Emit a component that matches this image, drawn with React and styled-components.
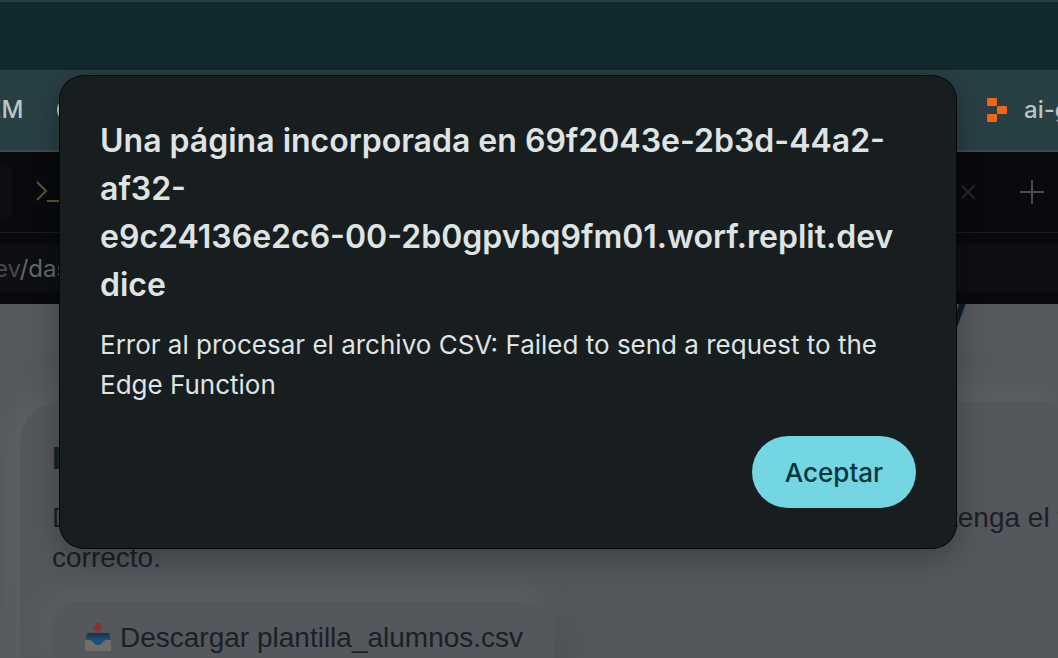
import React from "react";
import styled, { createGlobalStyle } from "styled-components";

const GlobalStyle = createGlobalStyle`
  *, *::before, *::after { box-sizing: border-box; }
  html, body, #root { height: 100%; }
  body {
    margin: 0;
    overflow: hidden;
    background: #55585d;
    font-family: Inter, "Liberation Sans", sans-serif;
  }
  h1, h2, p { margin: 0; }
`;

const Browser = styled.div`
  position: relative;
  display: flex;
  flex-direction: column;
  height: 100vh;
  overflow: hidden;
`;

const TabStrip = styled.div`
  height: 70px;
  flex: none;
  background: #12292d;
  border-top: 2px solid #263e42;
`;

const BookmarksBar = styled.nav`
  display: flex;
  align-items: center;
  justify-content: space-between;
  height: 82px;
  flex: none;
  background: #283f44;
  border-bottom: 2px solid #43494c;
`;

const BookmarkGroup = styled.div`
  display: flex;
  align-items: center;
  gap: 34px;
  width: ${(p) => p.$width};
  margin-left: ${(p) => p.$offset || "0"};
`;

const Bookmark = styled.a`
  display: flex;
  align-items: center;
  gap: 17px;
  flex: none;
  color: #bcc5c6;
  font-size: 24px;
  font-weight: 500;
  line-height: 32px;
  text-decoration: none;
  white-space: nowrap;
`;

const SiteDot = styled.span`
  width: 24px;
  height: 24px;
  border: 2px solid #bcc5c6;
  border-radius: 50%;
`;

const EditorTabs = styled.div`
  display: flex;
  align-items: center;
  justify-content: space-between;
  height: 81px;
  flex: none;
  background: #090a0d;
  border-bottom: 1px solid #1b1c1f;
`;

const TabGroup = styled.div`
  display: flex;
  align-items: center;
  gap: ${(p) => p.$gap};
  padding-right: ${(p) => p.$end || "0"};
`;

const ActiveTab = styled.div`
  width: 12px;
  height: 56px;
  border-radius: 0 8px 8px 0;
  background: #0e0f12;
`;

const IconButton = styled.button`
  display: flex;
  padding: 0;
  border: 0;
  background: none;
  color: ${(p) => p.$color};
`;

const AddressBar = styled.div`
  height: 71px;
  flex: none;
  padding: 11px 0 12px;
  background: #090a0d;
`;

const Address = styled.div`
  height: 48px;
  overflow: hidden;
  background: #0e0f12;
  color: #48494b;
  font-size: 24px;
  line-height: 50px;
  white-space: nowrap;
`;

const AddressText = styled.div`
  margin-left: -6px;
`;

const AddressPath = styled.span`
  color: #66676a;
`;

const Page = styled.main`
  flex: 1;
  min-height: 0;
  overflow: hidden;
  padding-left: 20px;
  background: #55585d;
  color: #1c2026;
  font-family: "Liberation Sans", Arial, sans-serif;
`;

const PageTitle = styled.h1`
  margin-top: -24px;
  padding-right: 90px;
  color: #151922;
  font-size: 48px;
  line-height: 56px;
  text-align: right;
`;

const Card = styled.section`
  margin-top: 66px;
  padding: 32px 0 32px 32px;
  border-radius: 40px 0 0 40px;
  background: #54575c;
  box-shadow: -8px -8px 32px #5e6065;
`;

const CardTitle = styled.h2`
  font-size: 32px;
  line-height: 48px;
`;

const CardText = styled.p`
  margin: 16px 0 24px;
  font-size: 28px;
  line-height: 40px;
`;

const TextLine = styled.span`
  display: flex;
  justify-content: space-between;
`;

const LineEnd = styled.span`
  width: 108px;
  white-space: nowrap;
`;

const DownloadLink = styled.a`
  display: inline-flex;
  align-items: center;
  gap: 8px;
  padding: 16px 32px;
  border-radius: 24px;
  background: #54575c;
  box-shadow: -8px -8px 32px #5e6065, 8px 8px 24px #4a4d52;
  color: #1c2026;
  font-size: 28px;
  line-height: 40px;
  text-decoration: none;
  white-space: nowrap;
`;

const Overlay = styled.div`
  position: absolute;
  inset: 0;
  display: flex;
  align-items: flex-start;
  padding: 76px 102px 0 60px;
`;

const Dialog = styled.div`
  flex: 1;
  padding: 41px 40px 40px;
  border-radius: 24px;
  background: #181d1f;
  box-shadow: 0 0 0 1px #050809, 0 8px 32px rgba(0, 0, 0, 0.3);
  color: #dee4e4;
`;

const DialogTitle = styled.h1`
  font-size: 32px;
  font-weight: 600;
  line-height: 48px;
`;

const DialogText = styled.p`
  margin: 16px 0 31px;
  font-size: 26px;
  line-height: 40px;
`;

const DialogActions = styled.div`
  display: flex;
  justify-content: flex-end;
`;

const AcceptButton = styled.button`
  min-width: 164px;
  height: 72px;
  padding: 0 32px;
  border: 0;
  border-radius: 36px;
  background: #74d6e3;
  color: #04373d;
  font-family: inherit;
  font-size: 26px;
  font-weight: 500;
`;

const ReplitLogo = () => (
  <svg width="20" height="24" viewBox="0 0 20 24" fill="#f26513" aria-hidden="true">
    <rect width="10" height="8" rx="1" />
    <rect x="10" y="8" width="10" height="8" rx="1" />
    <rect y="16" width="10" height="8" rx="1" />
  </svg>
);

const ShellIcon = () => (
  <svg width="28" height="24" viewBox="0 0 28 24" fill="none" stroke="#61532f" strokeWidth="2" aria-hidden="true">
    <path d="M1 2l9 9-9 9M11 21h16" />
  </svg>
);

const CloseIcon = () => (
  <svg width="14" height="14" viewBox="0 0 14 14" stroke="currentColor" strokeWidth="1.5" aria-hidden="true">
    <path d="M.5.5l13 13M13.5.5l-13 13" />
  </svg>
);

const PlusIcon = () => (
  <svg width="24" height="24" viewBox="0 0 24 24" stroke="currentColor" strokeWidth="2" aria-hidden="true">
    <path d="M12 0v24M0 12h24" />
  </svg>
);

const InboxIcon = () => (
  <svg width="28" height="32" viewBox="0 0 28 32" aria-hidden="true">
    <defs>
      <linearGradient id="tray" x1="0" y1="0" x2="0" y2="1">
        <stop offset="0" stopColor="#182f49" />
        <stop offset="1" stopColor="#255580" />
      </linearGradient>
    </defs>
    <path d="M3 11h22l2 8H1z" fill="url(#tray)" />
    <path d="M1 18h5c3 0 4 5 8 5s5-5 8-5h5v11H1z" fill="#706e6b" />
    <path d="M4 17h20l-2 1c-3 0-4 5-8 5s-5-5-8-5z" fill="#204c78" />
    <path d="M11 1h6v4h2.500L14 10.500 8.500 5H11z" fill="#8c302d" />
  </svg>
);

export default function App() {
  return (
    <>
      <GlobalStyle />
      <Browser>
        <TabStrip />
        <BookmarksBar>
          <BookmarkGroup $offset="-13px">
            <Bookmark href="#em">EM</Bookmark>
            <SiteDot />
          </BookmarkGroup>
          <BookmarkGroup $width="71px">
            <Bookmark href="#ai">
              <ReplitLogo />
              ai-g
            </Bookmark>
          </BookmarkGroup>
        </BookmarksBar>
        <EditorTabs>
          <TabGroup $gap="24px">
            <ActiveTab />
            <ShellIcon />
          </TabGroup>
          <TabGroup $gap="45px" $end="14px">
            <IconButton $color="#303134" aria-label="Cerrar pestaña">
              <CloseIcon />
            </IconButton>
            <IconButton $color="#4b4c4f" aria-label="Nueva pestaña">
              <PlusIcon />
            </IconButton>
          </TabGroup>
        </EditorTabs>
        <AddressBar>
          <Address>
            <AddressText>
              ev<AddressPath>/das</AddressPath>
            </AddressText>
          </Address>
        </AddressBar>
        <Page>
          <PageTitle>y</PageTitle>
          <Card>
            <CardTitle>D</CardTitle>
            <CardText>
              <TextLine>
                <span>D</span>
                <LineEnd>tenga el f</LineEnd>
              </TextLine>
              correcto.
            </CardText>
            <DownloadLink href="#plantilla">
              <InboxIcon />
              Descargar plantilla_alumnos.csv
            </DownloadLink>
          </Card>
        </Page>
        <Overlay>
          <Dialog role="alertdialog" aria-labelledby="dialog-title" aria-describedby="dialog-text">
            <DialogTitle id="dialog-title">
              Una página incorporada en 69f2043e-2b3d-44a2-
              <br />
              af32-
              <br />
              e9c24136e2c6-00-2b0gpvbq9fm01.worf.replit.dev
              <br />
              dice
            </DialogTitle>
            <DialogText id="dialog-text">
              Error al procesar el archivo CSV: Failed to send a request to the Edge Function
            </DialogText>
            <DialogActions>
              <AcceptButton type="button">Aceptar</AcceptButton>
            </DialogActions>
          </Dialog>
        </Overlay>
      </Browser>
    </>
  );
}
